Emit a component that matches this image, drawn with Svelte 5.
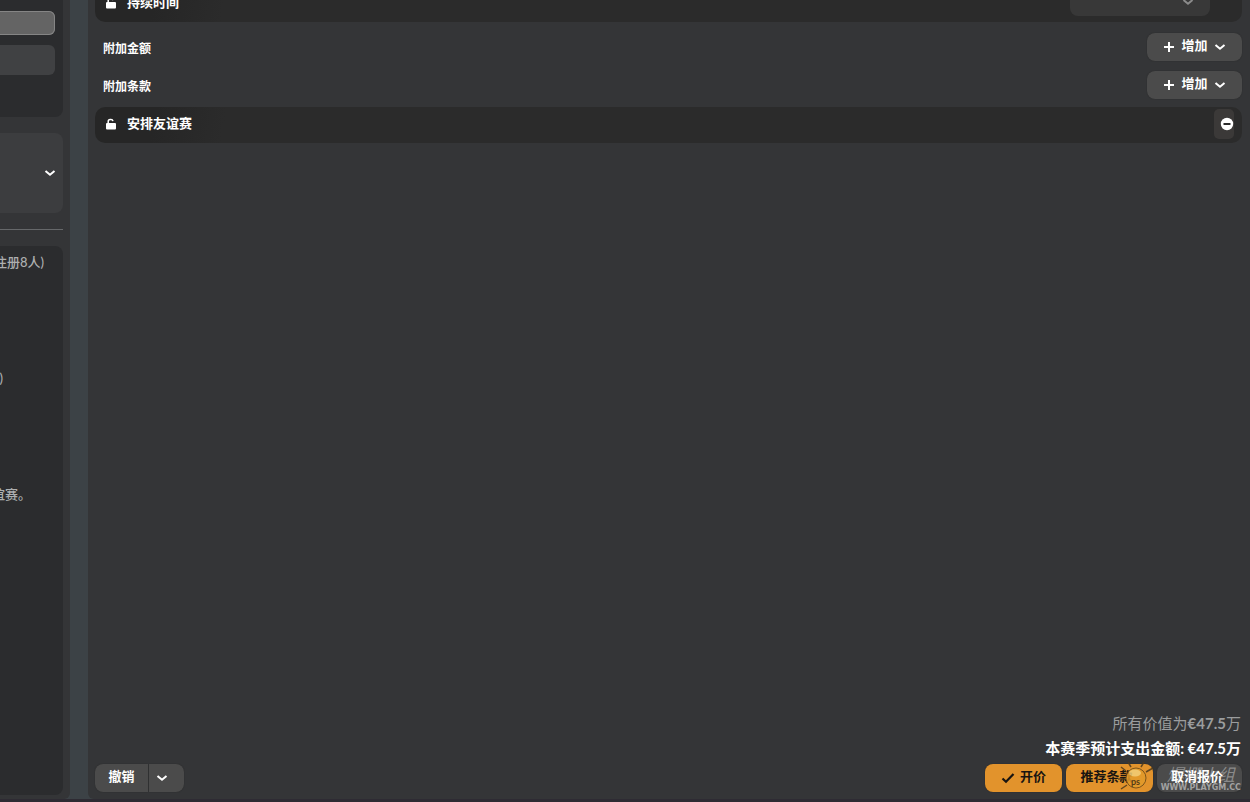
<style>
:global(html),
:global(body) {
  margin: 0;
  background: #3c4246;
  overflow: hidden;
}

.screen {
  display: flex;
  gap: 18px;
  height: 100vh;
  box-sizing: border-box;
  border-bottom: 3px solid #2e2b33;
  overflow: hidden;
  position: relative;
  color: #fff;
  font-family: Lato, "Noto Sans CJK SC", sans-serif;
  font-size: 13px;
  line-height: 20px;
}

button,
select {
  border: 0;
  margin: 0;
  padding: 0;
  color: inherit;
  font: inherit;
  font-weight: 700;
  cursor: pointer;
}

svg {
  display: block;
  fill: none;
  stroke: currentColor;
  stroke-width: 2;
  flex: none;
}

.sidebar {
  width: 70px;
  flex: none;
  display: flex;
  flex-direction: column;
  box-sizing: border-box;
  padding: 0 7px 4px 0;
  background: #343537;
  border-radius: 0 0 6px 0;
}

.card {
  background: #2b2c2e;
  border-radius: 0 0 8px 0;
}

.choices {
  height: 117px;
  box-sizing: border-box;
  padding: 11px 8px 0 0;
  display: flex;
  flex-direction: column;
  gap: 10px;
}

.choice {
  height: 30px;
  margin-left: -8px;
  background: #404143;
  border-radius: 6px;
}

.choice.selected {
  height: 24px;
  background: #646464;
  box-shadow: inset 0 0 0 1px #858585;
}

.picker {
  height: 80px;
  margin: 16px 0;
  padding-right: 7px;
  display: flex;
  align-items: center;
  justify-content: flex-end;
  background: #3c3d3f;
  border-radius: 0 8px 8px 0;
}

.sidebar hr {
  width: 100%;
  border: 0;
  height: 1px;
  margin: 0 0 16px;
  background: #66686a;
}

.notes {
  flex: 1;
  padding-top: 6px;
  border-radius: 0 8px 8px 0;
  color: #adafb0;
  font-weight: 500;
  overflow: hidden;
}

.notes p {
  margin: 0 0 96px;
  display: flex;
  justify-content: flex-end;
  white-space: nowrap;
}

.rules {
  padding-right: 19px;
}

.limit {
  padding-right: 60px;
}

.friendly {
  padding-right: 32px;
}

.offer {
  flex: 1;
  min-width: 0;
  display: flex;
  flex-direction: column;
  box-sizing: border-box;
  padding: 0 8px 7px 7px;
  background: #343537;
  border-radius: 0 0 0 6px;
}

.clauses {
  margin-top: -14px;
  flex: 1;
}

.clause {
  height: 36px;
  box-sizing: border-box;
  padding: 0 8px 2px 10px;
  display: flex;
  align-items: center;
  gap: 10px;
  border-radius: 10px;
  background: linear-gradient(100deg, #262626 60px, #282828 90px, #2b2b2b 130px);
  font-weight: 700;
}

.clause .lock {
  fill: currentColor;
}

.clause .name {
  flex: 1;
  padding-bottom: 2px;
}

.duration {
  position: relative;
  align-self: flex-start;
  margin: 2px 24px 0 0;
  color: #8b8b8b;
}

.duration select {
  display: block;
  width: 140px;
  height: 28px;
  appearance: none;
  background: #383838;
  border-radius: 8px;
}

.duration svg {
  position: absolute;
  right: 16px;
  top: 10px;
  pointer-events: none;
}

.remove {
  width: 20px;
  height: 30px;
  padding-left: 6px;
  border-radius: 5px;
  background: #3b3938;
}

.groups {
  padding: 6px 0 3px 8px;
}

.group {
  height: 38px;
  display: flex;
  align-items: center;
  justify-content: space-between;
  font-size: 12px;
  font-weight: 700;
}

.title {
  padding-top: 4px;
}

.button {
  height: 28px;
  display: flex;
  align-items: center;
  justify-content: center;
  border-radius: 8px;
  background: #4b4b4b;
  box-shadow: 0 0 1px #222;
  font-size: 13px;
  white-space: nowrap;
}

.button span {
  padding-bottom: 4px;
}

.add {
  width: 95px;
  gap: 6px;
}

.totals {
  text-align: right;
  font-size: 15px;
  line-height: 25px;
  margin: 0 1px 3px 0;
}

.totals p {
  margin: 0;
  font-weight: 700;
}

.totals .value {
  color: #9b9d9e;
  font-weight: 400;
}

.value b {
  font-weight: 700;
}

.actions {
  display: flex;
  justify-content: space-between;
}

.split,
.confirm {
  display: flex;
}

.split {
  gap: 1px;
}

.confirm {
  gap: 4px;
}

.undo {
  width: 53px;
  border-radius: 8px 0 0 8px;
}

.more {
  width: 35px;
  padding-right: 9px;
  border-radius: 0 8px 8px 0;
}

.primary {
  color: #191511;
  background: #e2932c;
}

.propose {
  width: 77px;
  gap: 5px;
}

.suggest {
  width: 87px;
  padding-right: 6px;
}

.cancel {
  width: 85px;
  padding-right: 5px;
}

.cancel span {
  position: relative;
  z-index: 2;
}

.watermark {
  position: absolute;
  z-index: 1;
  right: 9px;
  bottom: 6px;
  display: flex;
  align-items: flex-end;
  gap: 4px;
  pointer-events: none;
}

.watermark svg {
  opacity: 0.85;
}

.watermark div {
  color: #8a8a8a;
  text-align: center;
  font: italic 17px/18px "Noto Sans CJK SC", sans-serif;
}

.watermark small {
  display: block;
  color: #a2a2a2;
  font: 700 8px/10px "DejaVu Sans", sans-serif;
}
</style>

<script>
const groups = ['附加金额', '附加条款'];
let duration = '';
</script>

{#snippet chevron()}
  <svg width="12" height="8" viewBox="0 0 12 8"><path d="M1.500 2 6 5.800 10.500 2" /></svg>
{/snippet}

{#snippet lock()}
  <svg class="lock" width="12" height="12" viewBox="0 0 12 12">
    <rect x="1" y="5" width="10" height="6.500" rx="1" stroke="none" />
    <path d="M3.200 6V3.500Q3.200 1.500 5.200 1.500H6Q7.600 1.500 8 3.200" fill="none" stroke-width="1.500" />
  </svg>
{/snippet}

<div class="screen">
  <aside class="sidebar">
    <div class="card choices">
      <button class="choice selected" aria-label="1"></button>
      <button class="choice" aria-label="2"></button>
    </div>
    <button class="picker" aria-label="展开">{@render chevron()}</button>
    <hr />
    <div class="card notes">
      <p class="rules">注册8人)</p>
      <p class="limit">)</p>
      <p class="friendly">友谊赛。</p>
    </div>
  </aside>

  <main class="offer">
    <div class="clauses">
      <div class="clause">
        {@render lock()}
        <label class="name" for="duration">持续时间</label>
        <div class="duration">
          <select id="duration" bind:value={duration}>
            <option value=""></option>
          </select>
          {@render chevron()}
        </div>
      </div>

      <div class="groups">
        {#each groups as group}
          <div class="group">
            <span class="title">{group}</span>
            <button class="button add">
              <svg width="12" height="12" viewBox="0 0 12 12"><path d="M6 1V11M1 6H11" /></svg>
              <span>增加</span>
              {@render chevron()}
            </button>
          </div>
        {/each}
      </div>

      <div class="clause">
        {@render lock()}
        <span class="name">安排友谊赛</span>
        <button class="remove" aria-label="移除">
          <svg width="14" height="14" viewBox="0 0 14 14">
            <circle cx="7" cy="7" r="6.200" fill="#fff" stroke="none" />
            <path d="M3.500 7H10.500" stroke="#2b2b2b" />
          </svg>
        </button>
      </div>
    </div>

    <div class="totals">
      <p class="value">所有价值为<b>€47.5</b>万</p>
      <p>本赛季预计支出金额: €47.5万</p>
    </div>

    <div class="actions">
      <div class="split">
        <button class="button undo"><span>撤销</span></button>
        <button class="button more" aria-label="更多">{@render chevron()}</button>
      </div>
      <div class="confirm">
        <button class="button primary propose">
          <svg width="14" height="12" viewBox="0 0 14 12"><path d="M1.500 6.500 5 9.800 12.500 2" stroke-width="2.200" /></svg>
          <span>开价</span>
        </button>
        <button class="button primary suggest"><span>推荐条款</span></button>
        <button class="button cancel"><span>取消报价</span></button>
      </div>
    </div>
  </main>

  <div class="watermark">
    <svg width="40" height="32" viewBox="0 0 40 32">
      <path d="M9 10 4 6M14 6 11 1M24 6 27 1M29 11 36 7M8 18H1M10 24 4 28" stroke="#4e3a1d" stroke-width="1.500" />
      <circle cx="19" cy="17" r="10" fill="#e39b2a" stroke="#6b4a18" stroke-width="1" />
      <ellipse cx="18" cy="12" rx="6" ry="3.500" fill="#f3cf78" stroke="none" />
      <text x="14" y="24" font-size="9" font-weight="700" fill="#3c2c14" stroke="none">ps</text>
    </svg>
    <div>
      爆棚小组
      <small>WWW.PLAYGM.CC</small>
    </div>
  </div>
</div>
